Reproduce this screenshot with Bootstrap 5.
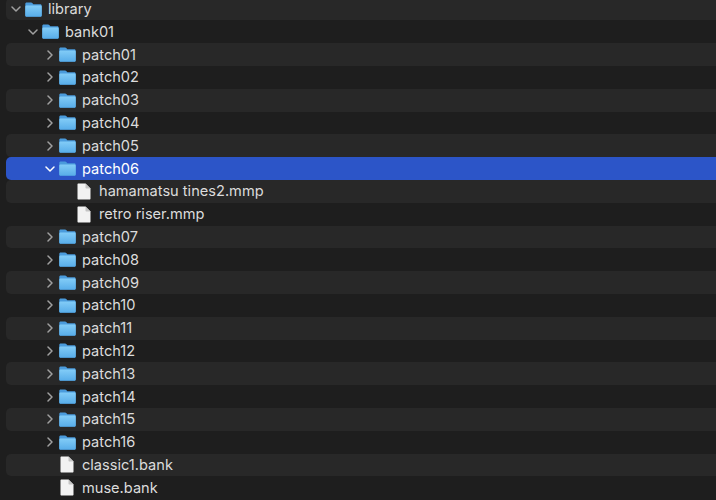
<!DOCTYPE html>
<html lang="en">
<head>
<meta charset="utf-8">
<title>library</title>
<link rel="stylesheet" href="https://cdn.jsdelivr.net/npm/bootstrap@5.3.0/dist/css/bootstrap.min.css">
<style>
html, body { background: #1e1e1e; height: 100%; overflow: hidden; }
.tree-list { margin: -2.4px -20px 0 6px; font: 400 14.6px Inter, "Liberation Sans", sans-serif; color: #dcdcdc; }
.tree-row { height: 22.8px; border-radius: 5px; white-space: nowrap; }
.tree-row:nth-child(odd) { background: #282828; }
.tree-row.is-selected { background: #2c55c8; color: #fff; }
.lvl0 { padding-left: 5px; }
.lvl1 { padding-left: 22px; }
.lvl2 { padding-left: 39px; }
.lvl3 { padding-left: 56px; }
.chev { width: 10px; height: 10px; flex: none; margin-right: 4px; fill: none; stroke: #a0a0a0; stroke-width: 1.5; stroke-linecap: round; stroke-linejoin: round; }
.is-selected .chev { stroke: #fff; }
.chev-gap { width: 14px; flex: none; }
.ico-folder { width: 17px; height: 15px; flex: none; margin-right: 6px; }
.ico-file { width: 14px; height: 17px; flex: none; margin-right: 8px; margin-left: 1px; }
</style>
</head>
<body>
<svg width="0" height="0" class="d-block" aria-hidden="true">
  <defs>
    <linearGradient id="fg" x1="0" y1="0" x2="0" y2="1"><stop offset="0" stop-color="#82ccf7"/><stop offset="1" stop-color="#58ade9"/></linearGradient>
    <symbol id="folder" viewBox="0 0 17 15">
      <path d="M1.8 0.5h4.2c.7 0 1 .2 1.5.8l.8.9h6.9c1 0 1.5.6 1.5 1.5v9.5c0 1-.5 1.5-1.5 1.5H1.8c-1 0-1.5-.5-1.5-1.5V2c0-1 .5-1.5 1.5-1.5z" fill="#4a9bdc"/>
      <path d="M1.8 3.6h13.4c1 0 1.5.5 1.5 1.3v8.2c0 1-.5 1.5-1.5 1.5H1.8c-1 0-1.5-.5-1.5-1.5V4.9c0-.8.5-1.3 1.5-1.3z" fill="url(#fg)"/>
    </symbol>
    <symbol id="file" viewBox="0 0 14 17">
      <path d="M1.5 0.5h7L13.5 5.5v10c0 .6-.4 1-1 1h-11c-.6 0-1-.4-1-1v-14c0-.6.4-1 1-1z" fill="#f2f2f2"/>
      <path d="M8.5 0.5v4c0 .6.4 1 1 1h4z" fill="#c4c4c4"/>
    </symbol>
  </defs>
</svg>
<div class="tree-list d-flex flex-column">
  <div class="tree-row d-flex align-items-center lvl0"><svg class="chev" viewBox="0 0 10 10"><path d="M1 3l4 4 4-4"/></svg><svg class="ico-folder"><use href="#folder"/></svg>library</div>
  <div class="tree-row d-flex align-items-center lvl1"><svg class="chev" viewBox="0 0 10 10"><path d="M1 3l4 4 4-4"/></svg><svg class="ico-folder"><use href="#folder"/></svg>bank01</div>
  <div class="tree-row d-flex align-items-center lvl2"><svg class="chev" viewBox="0 0 10 10"><path d="M3 1l4 4-4 4"/></svg><svg class="ico-folder"><use href="#folder"/></svg>patch01</div>
  <div class="tree-row d-flex align-items-center lvl2"><svg class="chev" viewBox="0 0 10 10"><path d="M3 1l4 4-4 4"/></svg><svg class="ico-folder"><use href="#folder"/></svg>patch02</div>
  <div class="tree-row d-flex align-items-center lvl2"><svg class="chev" viewBox="0 0 10 10"><path d="M3 1l4 4-4 4"/></svg><svg class="ico-folder"><use href="#folder"/></svg>patch03</div>
  <div class="tree-row d-flex align-items-center lvl2"><svg class="chev" viewBox="0 0 10 10"><path d="M3 1l4 4-4 4"/></svg><svg class="ico-folder"><use href="#folder"/></svg>patch04</div>
  <div class="tree-row d-flex align-items-center lvl2"><svg class="chev" viewBox="0 0 10 10"><path d="M3 1l4 4-4 4"/></svg><svg class="ico-folder"><use href="#folder"/></svg>patch05</div>
  <div class="tree-row is-selected d-flex align-items-center lvl2"><svg class="chev" viewBox="0 0 10 10"><path d="M1 3l4 4 4-4"/></svg><svg class="ico-folder"><use href="#folder"/></svg>patch06</div>
  <div class="tree-row d-flex align-items-center lvl3"><span class="chev-gap"></span><svg class="ico-file"><use href="#file"/></svg>hamamatsu tines2.mmp</div>
  <div class="tree-row d-flex align-items-center lvl3"><span class="chev-gap"></span><svg class="ico-file"><use href="#file"/></svg>retro riser.mmp</div>
  <div class="tree-row d-flex align-items-center lvl2"><svg class="chev" viewBox="0 0 10 10"><path d="M3 1l4 4-4 4"/></svg><svg class="ico-folder"><use href="#folder"/></svg>patch07</div>
  <div class="tree-row d-flex align-items-center lvl2"><svg class="chev" viewBox="0 0 10 10"><path d="M3 1l4 4-4 4"/></svg><svg class="ico-folder"><use href="#folder"/></svg>patch08</div>
  <div class="tree-row d-flex align-items-center lvl2"><svg class="chev" viewBox="0 0 10 10"><path d="M3 1l4 4-4 4"/></svg><svg class="ico-folder"><use href="#folder"/></svg>patch09</div>
  <div class="tree-row d-flex align-items-center lvl2"><svg class="chev" viewBox="0 0 10 10"><path d="M3 1l4 4-4 4"/></svg><svg class="ico-folder"><use href="#folder"/></svg>patch10</div>
  <div class="tree-row d-flex align-items-center lvl2"><svg class="chev" viewBox="0 0 10 10"><path d="M3 1l4 4-4 4"/></svg><svg class="ico-folder"><use href="#folder"/></svg>patch11</div>
  <div class="tree-row d-flex align-items-center lvl2"><svg class="chev" viewBox="0 0 10 10"><path d="M3 1l4 4-4 4"/></svg><svg class="ico-folder"><use href="#folder"/></svg>patch12</div>
  <div class="tree-row d-flex align-items-center lvl2"><svg class="chev" viewBox="0 0 10 10"><path d="M3 1l4 4-4 4"/></svg><svg class="ico-folder"><use href="#folder"/></svg>patch13</div>
  <div class="tree-row d-flex align-items-center lvl2"><svg class="chev" viewBox="0 0 10 10"><path d="M3 1l4 4-4 4"/></svg><svg class="ico-folder"><use href="#folder"/></svg>patch14</div>
  <div class="tree-row d-flex align-items-center lvl2"><svg class="chev" viewBox="0 0 10 10"><path d="M3 1l4 4-4 4"/></svg><svg class="ico-folder"><use href="#folder"/></svg>patch15</div>
  <div class="tree-row d-flex align-items-center lvl2"><svg class="chev" viewBox="0 0 10 10"><path d="M3 1l4 4-4 4"/></svg><svg class="ico-folder"><use href="#folder"/></svg>patch16</div>
  <div class="tree-row d-flex align-items-center lvl2"><span class="chev-gap"></span><svg class="ico-file"><use href="#file"/></svg>classic1.bank</div>
  <div class="tree-row d-flex align-items-center lvl2"><span class="chev-gap"></span><svg class="ico-file"><use href="#file"/></svg>muse.bank</div>
</div>
</body>
</html>
